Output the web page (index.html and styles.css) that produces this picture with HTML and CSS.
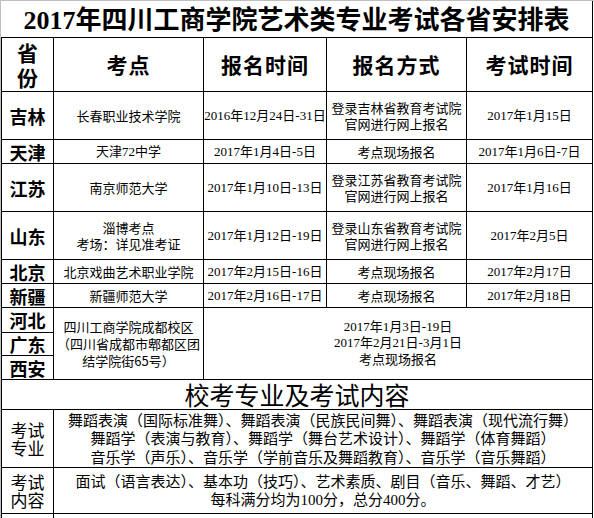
FILE: index.html
```html
<!DOCTYPE html>
<html lang="zh-CN">
<head>
<meta charset="utf-8">
<title>2017年四川工商学院艺术类专业考试各省安排表</title>
<link rel="stylesheet" href="styles.css">
</head>
<body>
<div class="sheet">
  <div class="title"><div><span class="num">2017</span>年四川工商学院艺术类专业考试各省安排表</div></div>
  <div class="grid">
    <div class="c h prov"><div>省<br>份</div></div>
    <div class="c h"><div>考点</div></div>
    <div class="c h"><div>报名时间</div></div>
    <div class="c h"><div>报名方式</div></div>
    <div class="c h"><div>考试时间</div></div>

    <div class="c p"><div>吉林</div></div>
    <div class="c"><div>长春职业技术学院</div></div>
    <div class="c d"><div>2016年12月24日-31日</div></div>
    <div class="c"><div>登录吉林省教育考试院<br>官网进行网上报名</div></div>
    <div class="c d"><div>2017年1月15日</div></div>

    <div class="c p"><div>天津</div></div>
    <div class="c"><div>天津<span class="num">72</span>中学</div></div>
    <div class="c d"><div>2017年1月4日-5日</div></div>
    <div class="c"><div>考点现场报名</div></div>
    <div class="c d"><div>2017年1月6日-7日</div></div>

    <div class="c p"><div>江苏</div></div>
    <div class="c"><div>南京师范大学</div></div>
    <div class="c d"><div>2017年1月10日-13日</div></div>
    <div class="c"><div>登录江苏省教育考试院<br>官网进行网上报名</div></div>
    <div class="c d"><div>2017年1月16日</div></div>

    <div class="c p"><div>山东</div></div>
    <div class="c"><div>淄博考点<br>考场：详见准考证</div></div>
    <div class="c d"><div>2017年1月12日-19日</div></div>
    <div class="c"><div>登录山东省教育考试院<br>官网进行网上报名</div></div>
    <div class="c d"><div>2017年2月5日</div></div>

    <div class="c p"><div>北京</div></div>
    <div class="c"><div>北京戏曲艺术职业学院</div></div>
    <div class="c d"><div>2017年2月15日-16日</div></div>
    <div class="c"><div>考点现场报名</div></div>
    <div class="c d"><div>2017年2月17日</div></div>

    <div class="c p"><div>新疆</div></div>
    <div class="c"><div>新疆师范大学</div></div>
    <div class="c d"><div>2017年2月16日-17日</div></div>
    <div class="c"><div>考点现场报名</div></div>
    <div class="c d"><div>2017年2月18日</div></div>

    <div class="c p"><div>河北</div></div>
    <div class="c span3 campus"><div>四川工商学院成都校区<br>（四川省成都市郫都区团<br>结学院街65号）</div></div>
    <div class="c span3 wide d"><div>2017年1月3日-19日<br>2017年2月21日-3月1日<br><span class="cjk">考点现场报名</span></div></div>
    <div class="c p"><div>广东</div></div>
    <div class="c p"><div>西安</div></div>

    <div class="c section"><div>校考专业及考试内容</div></div>

    <div class="c label"><div>考试<br>专业</div></div>
    <div class="c content"><div>舞蹈表演（国际标准舞）、舞蹈表演（民族民间舞）、舞蹈表演（现代流行舞）<br>舞蹈学（表演与教育）、舞蹈学（舞台艺术设计）、舞蹈学（体育舞蹈）<br>音乐学（声乐）、音乐学（学前音乐及舞蹈教育）、音乐学（音乐舞蹈）</div></div>

    <div class="c label"><div>考试<br>内容</div></div>
    <div class="c content"><div>面试（语言表达）、基本功（技巧）、艺术素质、剧目（音乐、舞蹈、才艺）<br>每科满分均为<span class="num">100</span>分，总分<span class="num">400</span>分。</div></div>

    <div class="c"></div>
    <div class="c content"></div>
  </div>
</div>
</body>
</html>
```

FILE: styles.css
```css
html, body {
  margin: 0;
  padding: 0;
  background: #ffffff;
}

body {
  font-family: "Noto Sans CJK SC", "Liberation Sans", sans-serif;
  color: #000;
}

.sheet {
  border-top: 1px solid #bfbfbf;
  border-left: 1px solid #bfbfbf;
  min-height: 530px;
  box-sizing: border-box;
}

.title {
  box-sizing: border-box;
  width: 592px;
  height: 36px;
  border-right: 1px solid #000;
  display: flex;
  align-items: center;
  justify-content: center;
  font-size: 26px;
  font-weight: 700;
  line-height: 30px;
  white-space: nowrap;
}

.num {
  font-family: "Liberation Serif", "Noto Sans CJK SC", serif;
}

.grid {
  box-sizing: border-box;
  width: 592px;
  display: grid;
  grid-template-columns: 51px 149px 122px 139px 125px;
  grid-template-rows: 53px 47px 23px 47px 47px 23px 23px 24px 22px 23px 29px 57px 45px 20px;
  gap: 1px;
  padding: 1px;
  background: #000;
}

.c {
  background: #fff;
  display: flex;
  align-items: center;
  justify-content: center;
  text-align: center;
  font-size: 13px;
  line-height: 16px;
  white-space: nowrap;
  min-height: 0;
  min-width: 0;
}

.h {
  font-size: 21px;
  font-weight: 700;
  letter-spacing: 1px;
  line-height: 25px;
}

.prov {
  letter-spacing: 0;
  padding-top: 1px;
}

.p {
  font-size: 18px;
  font-weight: 700;
  line-height: 20px;
}

.d {
  font-family: "Liberation Serif", "Noto Sans CJK SC", serif;
  font-size: 13px;
}

.cjk {
  font-family: "Noto Sans CJK SC", sans-serif;
}

.span3 {
  grid-row: span 3;
}

.wide {
  grid-column: 3 / 6;
}

.campus {
  font-size: 13px;
  line-height: 17px;
}

.section {
  grid-column: 1 / 6;
  font-size: 25px;
  line-height: 29px;
}

.label {
  font-size: 17px;
  line-height: 18px;
}

.content {
  grid-column: 2 / 6;
  font-size: 15px;
  line-height: 18.5px;
}
```
